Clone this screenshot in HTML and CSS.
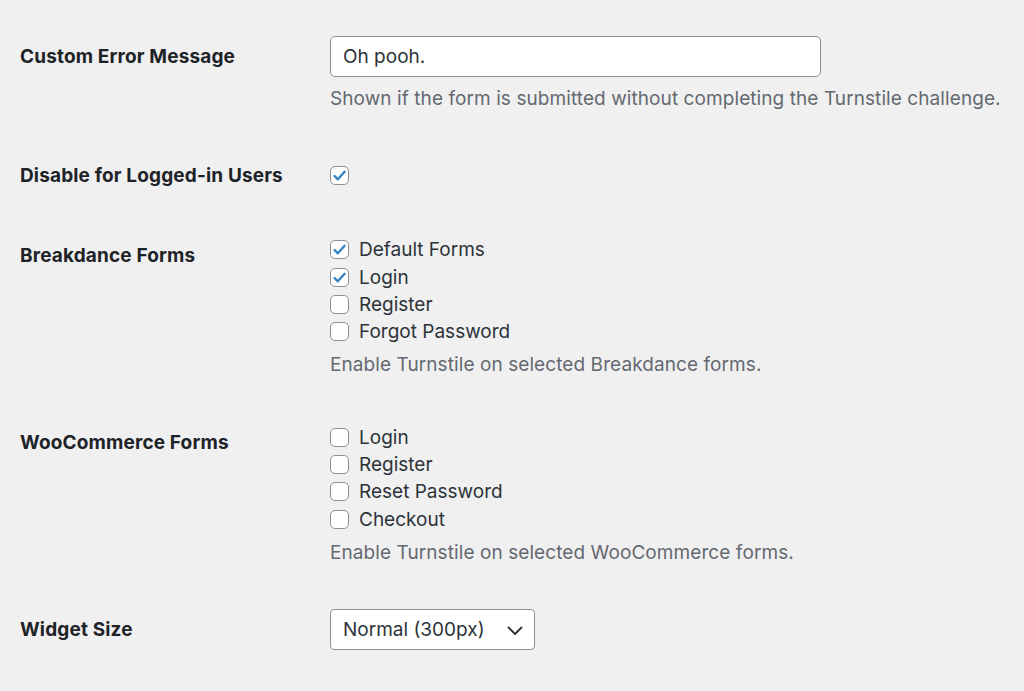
FILE: index.html
```html
<!DOCTYPE html>
<html lang="en">
<head>
<meta charset="utf-8">
<title>Turnstile Settings</title>
<link rel="stylesheet" href="styles.css">
</head>
<body>
<main class="settings">
  <div class="row row-error">
    <div class="label">Custom Error Message</div>
    <div class="field">
      <div class="text-input">Oh pooh.</div>
      <p class="desc desc-error">Shown if the form is submitted without completing the Turnstile challenge.</p>
    </div>
  </div>

  <div class="row row-logged">
    <div class="label label-check">Disable for Logged-in Users</div>
    <div class="field">
      <div class="option"><span class="cb checked"><svg viewBox="0 0 17 17"><path d="M3.6 9l3.2 3.3L13.6 4.8"/></svg></span></div>
    </div>
  </div>

  <div class="row row-breakdance">
    <div class="label label-list">Breakdance Forms</div>
    <div class="field">
      <div class="options">
        <div class="option"><span class="cb checked"><svg viewBox="0 0 17 17"><path d="M3.6 9l3.2 3.3L13.6 4.8"/></svg></span><span>Default Forms</span></div>
        <div class="option"><span class="cb checked"><svg viewBox="0 0 17 17"><path d="M3.6 9l3.2 3.3L13.6 4.8"/></svg></span><span>Login</span></div>
        <div class="option"><span class="cb"></span><span>Register</span></div>
        <div class="option"><span class="cb"></span><span>Forgot Password</span></div>
      </div>
      <p class="desc desc-list">Enable Turnstile on selected Breakdance forms.</p>
    </div>
  </div>

  <div class="row row-woo">
    <div class="label label-list">WooCommerce Forms</div>
    <div class="field">
      <div class="options">
        <div class="option"><span class="cb"></span><span>Login</span></div>
        <div class="option"><span class="cb"></span><span>Register</span></div>
        <div class="option"><span class="cb"></span><span>Reset Password</span></div>
        <div class="option"><span class="cb"></span><span>Checkout</span></div>
      </div>
      <p class="desc desc-list">Enable Turnstile on selected WooCommerce forms.</p>
    </div>
  </div>

  <div class="row row-size">
    <div class="label label-select">Widget Size</div>
    <div class="field">
      <div class="select"><span>Normal (300px)</span><svg class="chev" viewBox="0 0 20 20"><path d="M3.5 7.5l6.5 6.5 6.5-6.5"/></svg></div>
    </div>
  </div>
</main>
</body>
</html>
```

FILE: styles.css
```css
html, body {
  margin: 0;
  padding: 0;
  background: #f0f0f1;
}

body {
  font-family: Inter, "Noto Sans", "Liberation Sans", sans-serif;
  font-size: 19px;
  color: #1d2327;
  width: 1024px;
  height: 691px;
  overflow: hidden;
}

.settings {
  padding: 36px 0 0 20px;
}

.row {
  display: grid;
  grid-template-columns: 310px 1fr;
  align-items: start;
}

.label {
  font-weight: 700;
  line-height: 27px;
  letter-spacing: 0.15px;
  color: #1d2327;
  padding-top: 6.5px;
}

.label-check {
  padding-top: 0;
}

.label-list {
  padding-top: 6px;
}

.label-select {
  padding-top: 6.5px;
}

.row-logged {
  margin-top: 50px;
}

.row-breakdance {
  margin-top: 47.5px;
}

.row-woo {
  margin-top: 45px;
}

.row-size {
  margin-top: 43.5px;
}

.field {
  display: flex;
  flex-direction: column;
  align-items: flex-start;
}

.text-input {
  box-sizing: border-box;
  width: 491px;
  height: 41px;
  background: #fff;
  border: 1px solid #8c8f94;
  border-radius: 5px;
  padding: 0 12px;
  line-height: 39px;
  color: #2c3338;
}

.desc {
  margin: 0;
  color: #646970;
  line-height: 27px;
  letter-spacing: 0.08px;
}

.desc-error {
  margin-top: 7.5px;
}

.desc-list {
  margin-top: 6px;
}

.options {
  display: flex;
  flex-direction: column;
}

.option {
  display: flex;
  align-items: center;
  height: 27.3px;
  line-height: 27px;
  color: #2c3338;
}

.cb {
  box-sizing: border-box;
  flex: 0 0 19px;
  width: 19px;
  height: 19px;
  border: 1px solid #8c8f94;
  border-radius: 5px;
  background: #fff;
  margin-right: 10px;
  display: flex;
  align-items: center;
  justify-content: center;
}

.cb svg {
  display: block;
  width: 17px;
  height: 17px;
}

.cb svg path {
  fill: none;
  stroke: #3582c4;
  stroke-width: 2.4;
  stroke-linecap: round;
  stroke-linejoin: round;
}

.select {
  box-sizing: border-box;
  width: 205px;
  height: 41px;
  background: #fff;
  border: 1px solid #8c8f94;
  border-radius: 4px;
  padding: 0 9px 0 12px;
  display: flex;
  align-items: center;
  justify-content: space-between;
  color: #2c3338;
}

.chev {
  width: 20px;
  height: 20px;
}

.chev path {
  fill: none;
  stroke: #2c3338;
  stroke-width: 1.9;
  stroke-linecap: round;
  stroke-linejoin: round;
}
```
